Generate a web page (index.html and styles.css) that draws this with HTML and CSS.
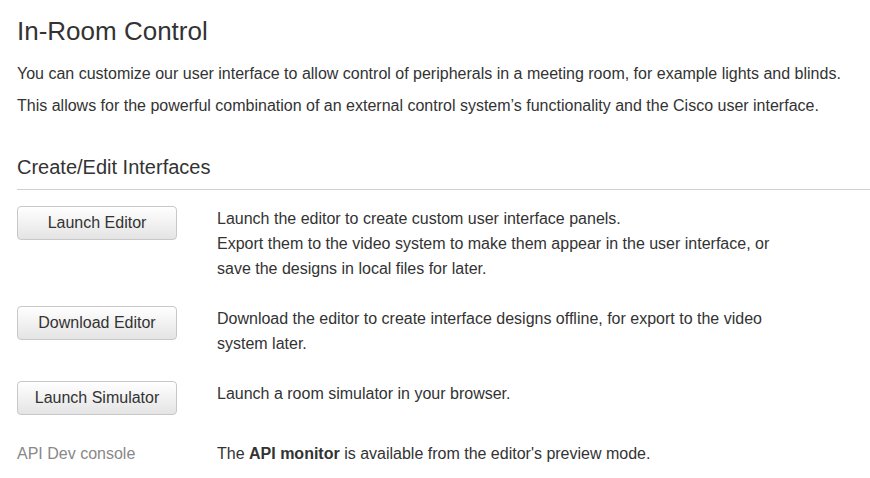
FILE: index.html
```html
<!DOCTYPE html>
<html lang="en">
<head>
<meta charset="utf-8">
<title>In-Room Control</title>
<link rel="stylesheet" href="styles.css">
</head>
<body>
<main class="page">
  <h1 class="title">In-Room Control</h1>
  <p class="intro">You can customize our user interface to allow control of peripherals in a meeting room, for example lights and blinds.</p>
  <p class="intro">This allows for the powerful combination of an external control system’s functionality and the Cisco user interface.</p>

  <h2 class="section-title">Create/Edit Interfaces</h2>

  <div class="rows">
    <div class="row">
      <div class="action"><button class="btn" type="button">Launch Editor</button></div>
      <div class="desc">Launch the editor to create custom user interface panels.<br>Export them to the video system to make them appear in the user interface, or<br>save the designs in local files for later.</div>
    </div>
    <div class="row">
      <div class="action"><button class="btn" type="button">Download Editor</button></div>
      <div class="desc">Download the editor to create interface designs offline, for export to the video<br>system later.</div>
    </div>
    <div class="row">
      <div class="action"><button class="btn" type="button">Launch Simulator</button></div>
      <div class="desc">Launch a room simulator in your browser.</div>
    </div>
    <div class="row row-last">
      <div class="action label">API Dev console</div>
      <div class="desc">The <strong>API monitor</strong> is available from the editor's preview mode.</div>
    </div>
  </div>
</main>
</body>
</html>
```

FILE: styles.css
```css
html, body {
  margin: 0;
  padding: 0;
  background: #fff;
}

body {
  font-family: "Liberation Sans", Arial, sans-serif;
  color: #333;
  font-size: 16px;
}

.page {
  padding: 0 0 0 17px;
}

.title {
  margin: 16px 0 18px;
  font-size: 26px;
  line-height: 30px;
  font-weight: normal;
  color: #333;
}

.intro {
  margin: 0 0 12px;
  font-size: 16px;
  line-height: 20px;
  white-space: nowrap;
}

.section-title {
  margin: 39px 0 0;
  padding-bottom: 10px;
  font-size: 20px;
  line-height: 24px;
  font-weight: normal;
  border-bottom: 1px solid #d0d0d0;
}

.rows {
  margin-top: 16px;
  display: flex;
  flex-direction: column;
  gap: 25px;
}

.row {
  display: grid;
  grid-template-columns: 200px 1fr;
  align-items: start;
}

.row-last {
  margin-top: 1px;
}

.btn {
  display: block;
  width: 160px;
  height: 34px;
  padding: 0;
  margin: 0;
  border: 1px solid #c8c8c8;
  border-radius: 4px;
  background: linear-gradient(#ffffff, #e4e4e4);
  font-family: "Liberation Sans", Arial, sans-serif;
  font-size: 16px;
  line-height: 32px;
  color: #333;
  text-align: center;
}

.label {
  font-size: 16px;
  line-height: 25px;
  color: #888;
}

.desc {
  font-size: 16px;
  line-height: 25px;
  color: #333;
  white-space: nowrap;
}

.desc strong {
  font-weight: bold;
}
```
